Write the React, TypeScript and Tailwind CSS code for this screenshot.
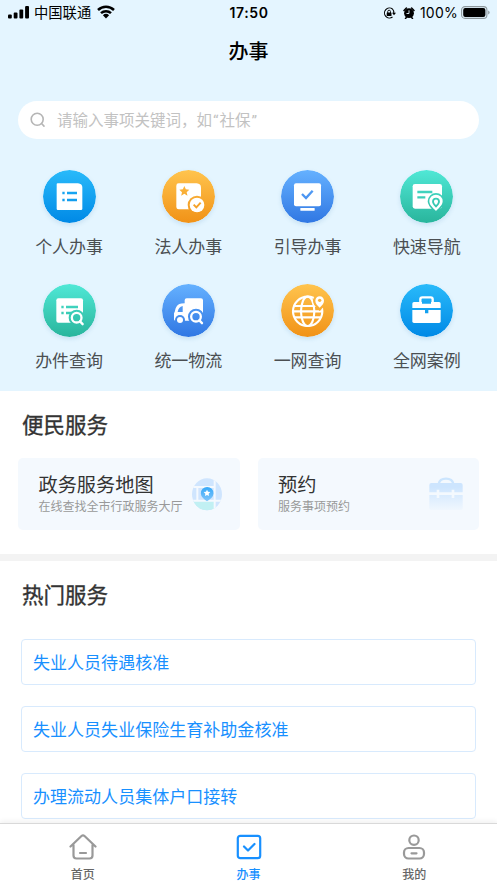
import type { ReactNode } from "react";

type Tone = "sky" | "orange" | "blue" | "teal";

const tones: Record<Tone, [string, string]> = {
  sky: ["#29bafa", "#0089e6"],
  orange: ["#ffc44e", "#f19217"],
  blue: ["#65b1ff", "#3077e3"],
  teal: ["#50e8d6", "#29b59c"],
};

const fill = (tone: Tone) => `url(#tone-${tone})`;

interface Service {
  label: string;
  tone: Tone;
  icon: ReactNode;
}

function Magnifier({ tone, cx, cy }: { tone: Tone; cx: number; cy: number }) {
  return (
    <>
      <circle cx={cx} cy={cy} r="24" fill={fill(tone)} />
      <path d={`M${cx + 10} ${cy + 10}l8 9`} stroke={fill(tone)} strokeWidth="15" />
      <circle cx={cx} cy={cy} r="14.5" fill="none" stroke="white" strokeWidth="7" />
      <path d={`M${cx + 10} ${cy + 11}l8 8.500`} stroke="white" strokeWidth="7" strokeLinecap="round" />
    </>
  );
}

const services: Service[] = [
  {
    label: "个人办事",
    tone: "sky",
    icon: (
      <>
        <path d="M44 40h61q13 1 13 13v63q0 4-4 4H44q-3 0-3-4V43q0-3 3-3z" fill="white" />
        <path d="M58 65.500h7v7h-7zM72 65.500h30v7H72zM58 86.500h7v7h-7zM72 86.500h30v7H72z" fill={fill("sky")} />
      </>
    ),
  },
  {
    label: "法人办事",
    tone: "orange",
    icon: (
      <>
        <path d="M50 40h54q13 1 13 13v61q0 4-4 4H50q-7 0-7-7V47q0-7 7-7z" fill="white" />
        <path d="M67 48l4.500 10 10.500 1-8 7.500 2.500 10.500-9.500-5.500-9.500 5.500 2.500-10.500-8-7.500 10.500-1z" fill={fill("orange")} />
        <circle cx="105" cy="105" r="28" fill={fill("orange")} />
        <circle cx="105" cy="105" r="22" fill="white" />
        <path d="M95 104l8 8 13-14" fill="none" stroke={fill("orange")} strokeWidth="6" />
      </>
    ),
  },
  {
    label: "引导办事",
    tone: "blue",
    icon: (
      <>
        <rect x="39" y="40" width="81" height="69" rx="6" fill="white" />
        <rect x="58" y="114" width="43" height="8" rx="1" fill="white" />
        <path d="M63 72l12 12 20-22" fill="none" stroke={fill("blue")} strokeWidth="7" />
      </>
    ),
  },
  {
    label: "快速导航",
    tone: "teal",
    icon: (
      <>
        <rect x="38" y="42" width="88" height="74" rx="7" fill="white" />
        <path d="M52 62.500h45v7H52zM52 78.500h24v7H52z" fill={fill("teal")} />
        <path d="M108 123c-9-9-20-18-20-29a20 20 0 0 1 40 0c0 11-11 20-20 29z" fill="white" stroke={fill("teal")} strokeWidth="10" />
        <path d="M108 123c-9-9-20-18-20-29a20 20 0 0 1 40 0c0 11-11 20-20 29z" fill="white" />
        <path d="M108 109c-5-5-9-9-9-14a9 9 0 0 1 18 0c0 5-4 9-9 14z" fill="white" stroke={fill("teal")} strokeWidth="5.500" />
      </>
    ),
  },
  {
    label: "办件查询",
    tone: "teal",
    icon: (
      <>
        <rect x="40" y="43" width="80" height="73" rx="6" fill="white" />
        <path d="M55 65.500h7v7h-7zM69 65.500h36v7H69zM55 83.500h7v7h-7zM69 83.500h20v7H69z" fill={fill("teal")} />
        <Magnifier tone="teal" cx={101} cy={101} />
      </>
    ),
  },
  {
    label: "统一物流",
    tone: "blue",
    icon: (
      <>
        <path d="M74 43h43q6 0 6 6v57q0 4-4 4H40q-4 0-4-4V87q2-2 3-7 3-15 13-20 5-2 16-2v-9q0-6 6-6z" fill="white" />
        <path d="M47 84q2-15 15-18v18z" fill={fill("blue")} />
        <circle cx="54" cy="108" r="15" fill={fill("blue")} />
        <circle cx="54" cy="108" r="9" fill="white" />
        <Magnifier tone="blue" cx={102} cy={98} />
      </>
    ),
  },
  {
    label: "一网查询",
    tone: "orange",
    icon: (
      <>
        <g fill="none" stroke="white" strokeWidth="6.500">
          <circle cx="80" cy="82" r="44" />
          <ellipse cx="80" cy="82" rx="20" ry="44" />
          <path d="M41 66h78M36 82h88M42 100h76" />
        </g>
        <path d="M116 71c-7-7-13-13-13-21a13 13 0 0 1 26 0c0 8-6 14-13 21z" fill="none" stroke={fill("orange")} strokeWidth="14" />
        <path d="M116 71c-7-7-13-13-13-21a13 13 0 0 1 26 0c0 8-6 14-13 21z" fill="white" />
        <circle cx="116" cy="49" r="5" fill={fill("orange")} />
      </>
    ),
  },
  {
    label: "全网案例",
    tone: "sky",
    icon: (
      <>
        <path d="M61 63V46q0-6 6-6h25q6 0 6 6v17" fill="none" stroke="white" strokeWidth="7" />
        <path d="M42 54h75q5 0 5 5v13H37V59q0-5 5-5z" fill="white" />
        <path d="M66 54h27v5H66z" fill={fill("sky")} />
        <path d="M37 78h85v34q0 5-5 5H42q-5 0-5-5z" fill="white" />
        <path d="M75 78h10v10H75z" fill={fill("sky")} />
      </>
    ),
  },
];

const hotItems = ["失业人员待遇核准", "失业人员失业保险生育补助金核准", "办理流动人员集体户口接转"];

function StatusBar() {
  return (
    <div className="grid grid-cols-3 items-center h-[25px] pl-2 pr-[7px] text-black">
      <div className="flex items-center">
        <svg className="w-[21px] h-[13px]" viewBox="0 0 21 13">
          <rect x="0" y="8.500" width="3.800" height="4" rx="1" />
          <rect x="5.700" y="6.500" width="3.800" height="6" rx="1" />
          <rect x="11.400" y="3.500" width="3.800" height="9" rx="1" />
          <rect x="17.100" y="0" width="3.900" height="12.500" rx="1" />
        </svg>
        <span className="ml-[5px] text-[14.3px] leading-none">中国联通</span>
        <svg className="ml-[6px] w-[18px] h-[14px]" viewBox="0 0 18 14">
          <g fill="none" stroke="black" strokeWidth="2.500">
            <path d="M1 5a11.500 11.500 0 0 1 16 0" />
            <path d="M4 8.200a7.300 7.300 0 0 1 10 0" />
          </g>
          <path d="M9 13.500l-3.100-3.200a4.500 4.500 0 0 1 6.200 0z" />
        </svg>
      </div>
      <span className="text-center text-[14px] leading-none font-semibold tracking-[0.6px] font-[Inter]">17:50</span>
      <div className="flex items-center justify-end">
        <svg className="w-[13px] h-3" viewBox="0 0 13 12">
          <path d="M9.500 2A5 5 0 1 0 9.500 10M9.500 2a5 5 0 0 1 1.300 4" fill="none" stroke="black" strokeWidth="1.100" />
          <path d="M9 5.800h4L11 8.300z" />
          <rect x="3.700" y="5.500" width="4.800" height="3.500" rx=".5" />
          <path d="M4.700 6V4.600a1.400 1.400 0 0 1 2.800 0V6" fill="none" stroke="black" strokeWidth=".9" />
        </svg>
        <svg className="ml-[7px] w-3 h-3" viewBox="0 0 12 12">
          <circle cx="6" cy="6.200" r="4.900" />
          <path d="M1 3.500L3.400 1M11 3.500L8.600 1M2.500 11.600l1-1.500M9.500 11.600l-1-1.500" stroke="black" strokeWidth="1.500" strokeLinecap="round" />
          <path d="M6 3.300v3.200H3.500" fill="none" stroke="#e4f5ff" strokeWidth=".9" />
        </svg>
        <span className="ml-[5px] text-[14px] leading-none tracking-[0.25px] font-[Inter]">100%</span>
        <svg className="ml-[3px] w-[29px] h-[13px]" viewBox="0 0 29 13">
          <rect x=".6" y=".6" width="25.300" height="11.800" rx="3.400" fill="none" stroke="#8d989d" strokeWidth="1.100" />
          <rect x="2.200" y="2.100" width="22.200" height="8.800" rx="2" />
          <path d="M27.200 4.500q1.400.6 1.400 2t-1.400 2z" fill="#8d989d" />
        </svg>
      </div>
    </div>
  );
}

function ServiceButton({ label, tone, icon }: Service) {
  return (
    <div className="flex flex-col items-center h-[114px]">
      <svg className="w-[53px] h-[53px] rounded-full shadow-[0_2px_4px_rgba(60,130,180,0.16)]" viewBox="0 0 159 159">
        <circle cx="79.500" cy="79.500" r="79.500" fill={fill(tone)} />
        {icon}
      </svg>
      <span className="mt-[11px] text-[17px] leading-6 text-[#4b4f52]">{label}</span>
    </div>
  );
}

function MapArt() {
  return (
    <svg className="mr-[2px] w-[30px] h-[33px]" viewBox="0 0 90 99">
      <defs>
        <clipPath id="map-clip">
          <ellipse cx="45" cy="49" rx="45" ry="48" />
        </clipPath>
        <linearGradient id="map-pin" x2="0" y2="1">
          <stop stopColor="#35a8f8" />
          <stop offset="1" stopColor="#82c6fb" />
        </linearGradient>
      </defs>
      <g clipPath="url(#map-clip)">
        <path d="M0 0h90v99H0z" fill="#cfe5fe" />
        <path d="M0 70h66v29H0z" fill="#c1f0f3" />
        <path d="M0 27h66M16 27v41M68 0v99M0 68h90" stroke="#f4f9fe" strokeWidth="6" />
      </g>
      <path d="M45 70q-7-5-12-10a19 19 0 1 1 25 0q-6 5-13 10z" fill="url(#map-pin)" />
      <path d="M45 35l3 6 7 1-5 5 1 7-6-3-6 3 1-7-5-5 7-1z" fill="white" />
    </svg>
  );
}

function BagArt() {
  return (
    <svg className="w-[34px] h-[34px]" viewBox="0 0 102 102">
      <defs>
        <linearGradient id="bag" gradientUnits="userSpaceOnUse" x1="0" y1="0" x2="0" y2="100">
          <stop offset=".3" stopColor="#cde5fe" />
          <stop offset="1" stopColor="#f0f7fe" />
        </linearGradient>
      </defs>
      <path d="M29 21q3-16 22-16t22 16" fill="none" stroke="#cbe5fe" strokeWidth="7" />
      <path d="M7 18h88q6 0 6 6v22H1V24q0-6 6-6zM1 54h100v39q0 6-6 6H7q-6 0-6-6z" fill="url(#bag)" />
      <path d="M27 38v25M72 38v25" stroke="#f4f9fe" strokeWidth="8" />
    </svg>
  );
}

function ConvenienceCard({ title, text, art }: { title: string; text: string; art: ReactNode }) {
  return (
    <div className="flex items-center justify-between h-[72px] rounded-[5px] bg-[#f4f9fe] pl-[20.5px] pr-4">
      <div>
        <p className="text-[19.2px] leading-6 text-[#333]">{title}</p>
        <p className="text-[12px] leading-5 text-[#999]">{text}</p>
      </div>
      {art}
    </div>
  );
}

function SectionTitle({ children }: { children: ReactNode }) {
  return (
    <h2 className="px-[22px] text-[21.5px] leading-8 text-[#333] [-webkit-text-stroke:0.35px_#333]">{children}</h2>
  );
}

function TabItem({ label, active = false, children }: { label: string; active?: boolean; children: ReactNode }) {
  return (
    <div className={active ? "flex-1 flex flex-col items-center text-[#1890ff]" : "flex-1 flex flex-col items-center text-[#999]"}>
      <svg
        className="mt-[10px] w-7 h-[26px]"
        viewBox="0 0 28 26"
        fill="none"
        stroke="currentColor"
        strokeWidth="2.200"
        strokeLinecap="round"
        strokeLinejoin="round"
      >
        {children}
      </svg>
      <span className={active ? "mt-[6px] text-[12px] leading-4 font-medium" : "mt-[6px] text-[12px] leading-4 font-medium text-[#666]"}>
        {label}
      </span>
    </div>
  );
}

export default function App() {
  return (
    <div
      lang="zh-CN"
      className="relative h-screen flex flex-col overflow-hidden bg-white font-['Noto_Sans_CJK_SC',sans-serif]"
    >
      {/* shared gradients, must stay rendered or the fills drop out */}
      <svg className="absolute w-0 h-0">
        <defs>
          {Object.entries(tones).map(([name, [from, to]]) => (
            <linearGradient key={name} id={`tone-${name}`} gradientUnits="userSpaceOnUse" x1="0" y1="0" x2="0" y2="159">
              <stop stopColor={from} />
              <stop offset="1" stopColor={to} />
            </linearGradient>
          ))}
        </defs>
      </svg>

      <main className="flex-1 min-h-0 overflow-hidden">
        <header className="h-[391px] bg-[#e4f5ff]">
          <StatusBar />
          <h1 className="h-[52px] text-center text-[20px] leading-[51px] font-medium text-black">办事</h1>
          <div className="mt-6 mx-[18px] flex items-center h-[38px] rounded-full bg-white pl-3">
            <svg className="w-4 h-4" viewBox="0 0 16 16" fill="none" stroke="#b5b5b5" strokeWidth="1.600" strokeLinecap="round">
              <circle cx="7.200" cy="7.200" r="6" />
              <path d="M11.800 11.800l2.200 2.300" />
            </svg>
            <span className="ml-[11px] text-[15.5px] leading-6 text-[#c2c2c2]">
              请输入事项关键词，如<span className="pl-px tracking-[1px] font-[Roboto]">“</span>社保
              <span className="pl-px font-[Roboto]">”</span>
            </span>
          </div>
          <div className="mt-[31px] grid grid-cols-4 pl-[9.5px] pr-[10.5px]">
            {services.map((s) => (
              <ServiceButton key={s.label} {...s} />
            ))}
          </div>
        </header>

        <section className="h-[163px] pt-[17px]">
          <SectionTitle>便民服务</SectionTitle>
          <div className="mt-[18px] px-[18px] grid grid-cols-2 gap-[18px]">
            <ConvenienceCard title="政务服务地图" text="在线查找全市行政服务大厅" art={<MapArt />} />
            <ConvenienceCard title="预约" text="服务事项预约" art={<BagArt />} />
          </div>
        </section>

        <div className="h-[7px] bg-[#f3f3f3]" />

        <section className="pt-[17px]">
          <SectionTitle>热门服务</SectionTitle>
          <ul className="mt-[29px] mx-[21px] space-y-[21px]">
            {hotItems.map((item) => (
              <li
                key={item}
                className="flex items-center h-[46px] rounded border border-[#d8eafd] pl-[11px] text-[17.05px] text-[#1890ff]"
              >
                {item}
              </li>
            ))}
          </ul>
        </section>
      </main>

      <nav className="relative flex h-[60px] border-t border-[#d9d9d9] bg-white shadow-[0_-2px_5px_rgba(0,0,0,0.06)]">
        <TabItem label="首页">
          <path d="M1.500 12.500L12.500 2q1.500-1.400 3 0l11 10.500M4.500 11v10.500q0 3 3 3h13q3 0 3-3V11M11 19h6" />
        </TabItem>
        <TabItem label="办事" active>
          <rect x="2.800" y="1.800" width="22.400" height="22.400" rx="2.500" />
          <path d="M9 12.500l4 4 6.500-6.500" />
        </TabItem>
        <TabItem label="我的">
          <circle cx="14" cy="6.200" r="4.700" />
          <rect x="4" y="14" width="20" height="10.500" rx="4.500" />
          <path d="M11.500 19.300h5" />
        </TabItem>
      </nav>
    </div>
  );
}
